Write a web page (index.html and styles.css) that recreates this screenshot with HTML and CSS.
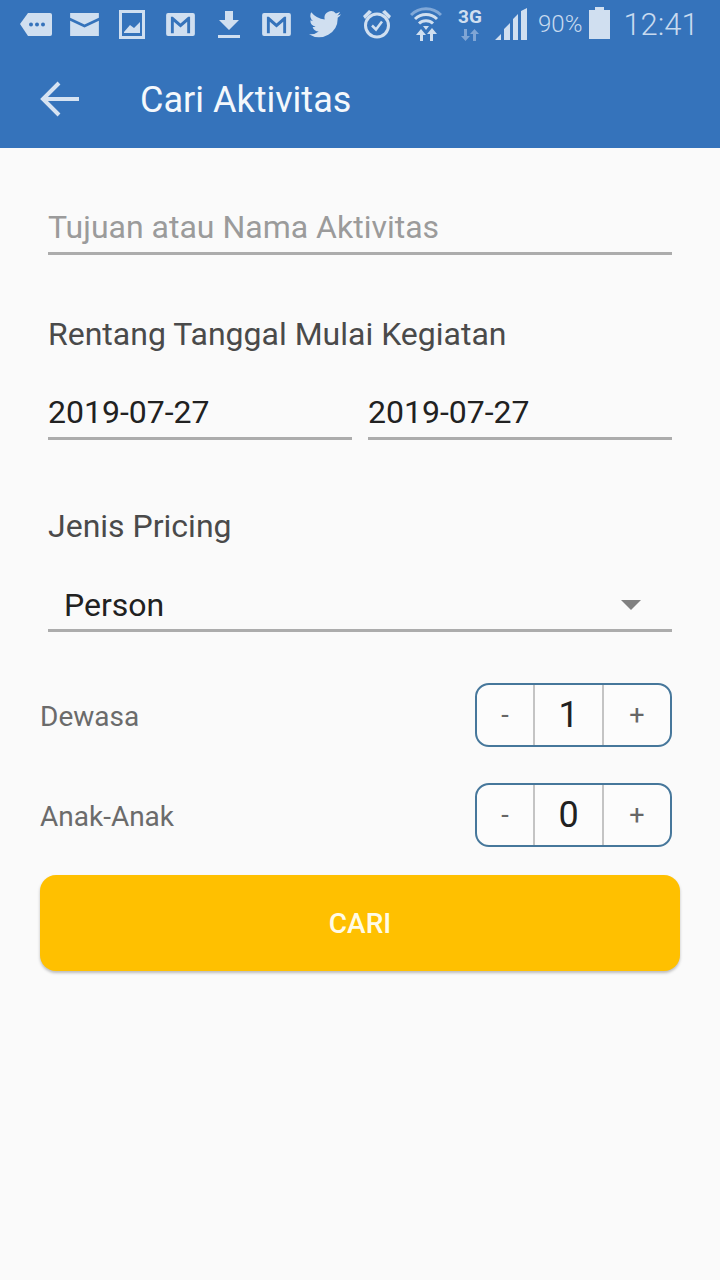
FILE: index.html
```html
<!DOCTYPE html>
<html lang="id">
<head>
<meta charset="utf-8">
<title>Cari Aktivitas</title>
<link rel="stylesheet" href="styles.css">
</head>
<body>
<div class="screen">
  <header class="header">
    <div class="status">
      <div class="status-icons">
        <svg class="si i-msg" viewBox="0 0 32 24"><path d="M8 1H30a2 2 0 0 1 2 2V22a2 2 0 0 1-2 2H8L0 12Z" fill="#d0dff0"/><circle cx="11" cy="12.500" r="2" fill="#3573bb"/><circle cx="17" cy="12.500" r="2" fill="#3573bb"/><circle cx="23" cy="12.500" r="2" fill="#3573bb"/></svg>
        <svg class="si i-mail" viewBox="0 0 30 24"><path d="M0 0H30V5L15 12 0 5Z" fill="#d0dff0"/><path d="M0 8L15 15 30 8V24H0Z" fill="#d0dff0"/></svg>
        <svg class="si i-pic" viewBox="0 0 26 29"><path fill-rule="evenodd" d="M0 0H26V29H0ZM3 3V26H23V3Z" fill="#d0dff0"/><path d="M5 22L11 15 15 18 21 12V23H5Z" fill="#d0dff0"/></svg>
        <svg class="si i-gm1" viewBox="0 0 30 24"><path fill-rule="evenodd" d="M2 0H28a2 2 0 0 1 2 2V22a2 2 0 0 1-2 2H2a2 2 0 0 1-2-2V2a2 2 0 0 1 2-2ZM5 4V21H8V9L15 15 22 9V21H25V4H23L15 11 7 4Z" fill="#d0dff0"/></svg>
        <svg class="si i-dl" viewBox="0 0 22 27"><path d="M7 0H15V9H21L11 19 1 9H7ZM0 24H22V27H0Z" fill="#d0dff0"/></svg>
        <svg class="si i-gm2" viewBox="0 0 30 24"><path fill-rule="evenodd" d="M2 0H28a2 2 0 0 1 2 2V22a2 2 0 0 1-2 2H2a2 2 0 0 1-2-2V2a2 2 0 0 1 2-2ZM5 4V21H8V9L15 15 22 9V21H25V4H23L15 11 7 4Z" fill="#d0dff0"/></svg>
        <svg class="si i-tw" viewBox="0 0 24 20"><path d="M24 2.400a10 10 0 0 1-2.800.8A5 5 0 0 0 23.300.500a10 10 0 0 1-3.100 1.200 4.900 4.900 0 0 0-8.400 4.500A14 14 0 0 1 1.700.900a4.900 4.900 0 0 0 1.500 6.600A5 5 0 0 1 1 6.900a4.900 4.900 0 0 0 3.900 4.800 5 5 0 0 1-2.200.1 4.900 4.900 0 0 0 4.600 3.400A10 10 0 0 1 0 17.300 14 14 0 0 0 21.500 5c1-.7 1.900-1.600 2.500-2.600Z" fill="#d0dff0"/></svg>
        <svg class="si i-alarm" viewBox="0 0 30 30"><circle cx="15" cy="16.500" r="11.500" fill="none" stroke="#d0dff0" stroke-width="3"/><path d="M10 16.500L14 20.500 20 12.500" fill="none" stroke="#d0dff0" stroke-width="2.500"/><path d="M1 7L7 1 10 3 3 10ZM29 7L23 1 20 3 27 10Z" fill="#d0dff0"/></svg>
        <svg class="si i-wifi" viewBox="0 0 32 34"><path d="M1 8A21 21 0 0 1 31 8" fill="none" stroke="#80a8d8" stroke-width="3"/><path d="M5 12A16 16 0 0 1 27 12M9 16.500A10 10 0 0 1 23 16.500" fill="none" stroke="#d0dff0" stroke-width="3"/><path d="M13 19H19L16 23Z" fill="#d0dff0"/><path d="M10 34V28H6L11 22 16 28H13V34ZM20 34V27H17L22 21 27 27H23V34Z" fill="#d0dff0"/></svg>
        <div class="net"><span class="net-label">3G</span><svg class="net-arrows" viewBox="0 0 20 12"><path d="M4 0H7V7H10L5.500 12 1 7H4ZM13 12H16V5H19L14.500 0 10 5H13Z" fill="#7fa5d5"/></svg></div>
        <svg class="si i-signal" viewBox="0 0 32 32"><path d="M0 32L6 26V32ZM9 32V21L15 15V32ZM18 32V11L23 6V32ZM26 32V3L32 0V32Z" fill="#d0dff0"/></svg>
      </div>
      <span class="pct">90%</span>
      <svg class="battery" viewBox="0 0 21 32"><path d="M6 0H15V3H21V32H0V3H6Z" fill="#d0dff0"/></svg>
      <span class="clock">12:41</span>
    </div>
    <div class="appbar">
      <svg class="back" viewBox="0 0 40 36"><path d="M39 18H3M19 2L3 18 19 34" fill="none" stroke="#d6e3f2" stroke-width="4"/></svg>
      <h1 class="title">Cari Aktivitas</h1>
    </div>
  </header>
  <main class="content">
    <div class="form">
      <div class="field placeholder">Tujuan atau Nama Aktivitas</div>
      <div class="label label-range">Rentang Tanggal Mulai Kegiatan</div>
      <div class="dates">
        <div class="field value">2019-07-27</div>
        <div class="field value">2019-07-27</div>
      </div>
      <div class="label label-pricing">Jenis Pricing</div>
      <div class="field select"><span>Person</span><span class="caret"></span></div>
    </div>
    <div class="counter-row first">
      <span class="counter-label">Dewasa</span>
      <div class="stepper"><span class="step minus">-</span><span class="count">1</span><span class="step plus">+</span></div>
    </div>
    <div class="counter-row second">
      <span class="counter-label">Anak-Anak</span>
      <div class="stepper"><span class="step minus">-</span><span class="count">0</span><span class="step plus">+</span></div>
    </div>
    <button class="search">CARI</button>
  </main>
</div>
</body>
</html>
```
FILE: styles.css
```css
* { box-sizing: border-box; }
html, body { margin: 0; padding: 0; }
body { font-family: Roboto, "Noto Sans", sans-serif; background: #fafafa; }
.screen { width: 720px; height: 1280px; background: #fafafa; overflow: hidden; }
.header { height: 148px; background: #3573bb; }
.status { height: 48px; display: flex; align-items: center; padding: 0 0 0 20px; color: #d0dff0; }
.status-icons { display: flex; align-items: center; }
.si { flex: none; display: block; }
.i-msg { width: 32px; height: 24px; }
.i-mail { width: 29px; height: 23px; margin-left: 18px; }
.i-pic { width: 26px; height: 29px; margin-left: 20px; }
.i-gm1 { width: 29px; height: 23px; margin-left: 21px; }
.i-dl { width: 22px; height: 27px; margin-left: 23px; }
.i-gm2 { width: 29px; height: 23px; margin-left: 22px; }
.i-tw { width: 32px; height: 27px; margin-left: 18px; }
.i-alarm { width: 30px; height: 30px; margin-left: 21px; }
.i-wifi { width: 32px; height: 34px; margin-left: 18px; }
.net { width: 26px; margin-left: 15px; display: flex; flex-direction: column; align-items: center; }
.net-label { font-size: 19px; font-weight: 700; line-height: 20px; }
.net-arrows { width: 20px; height: 12px; margin-top: 2px; }
.i-signal { width: 32px; height: 32px; margin-left: 12px; }
.pct { font-size: 24px; font-weight: 300; margin-left: 11px; color: #c8daef; }
.battery { width: 21px; height: 32px; margin-left: 7px; margin-bottom: 2px; }
.clock { font-size: 31px; font-weight: 300; margin-left: 13px; color: #c8daef; }
.appbar { height: 100px; display: flex; align-items: center; padding: 2px 0 0 40px; }
.back { width: 40px; height: 36px; }
.title { margin: 2px 0 0 60px; font-size: 36px; font-weight: 400; color: #f4f8fc; }
.content { padding: 0 40px; }
.form { padding: 0 8px; }
.field { height: 47px; border-bottom: 3px solid #acacac; font-size: 32px; line-height: 38px; }
.placeholder { margin-top: 60px; color: #9b9b9b; }
.label { font-size: 32px; line-height: 40px; color: #4a4a4a; }
.label-range { margin-top: 59px; }
.dates { display: flex; gap: 16px; margin-top: 39px; }
.dates .field { flex: 1; }
.value { color: #212121; }
.label-pricing { margin-top: 66px; }
.select { margin-top: 39px; padding: 0 8px 4px 16px; display: flex; justify-content: space-between; align-items: center; color: #212121; }
.caret { width: 0; height: 0; border-left: 10px solid transparent; border-right: 10px solid transparent; border-top: 10px solid #808080; margin-right: 23px; margin-top: -1px; }
.counter-row { display: flex; justify-content: space-between; align-items: center; padding-right: 8px; }
.first { margin-top: 51px; }
.second { margin-top: 36px; }
.counter-label { font-size: 28px; color: #6b6b6b; padding-top: 2px; }
.stepper { width: 197px; height: 64px; display: flex; border: 2px solid #46779b; border-radius: 14px; background: #fcfcfc; }
.step { flex: none; display: flex; align-items: center; justify-content: center; font-size: 27px; color: #666; }
.minus { width: 56px; }
.plus { flex: 1; }
.count { width: 71px; display: flex; align-items: center; justify-content: center; font-size: 36px; color: #212121; border: solid #c4c4c4; border-width: 0 2px; }
.search { display: block; width: 640px; height: 96px; margin-top: 28px; border: 0; border-radius: 16px; background: #ffc000; color: #fffbe8; font-family: inherit; font-size: 28px; font-weight: 500; box-shadow: 0 2px 3px rgba(0,0,0,.25); }
```
